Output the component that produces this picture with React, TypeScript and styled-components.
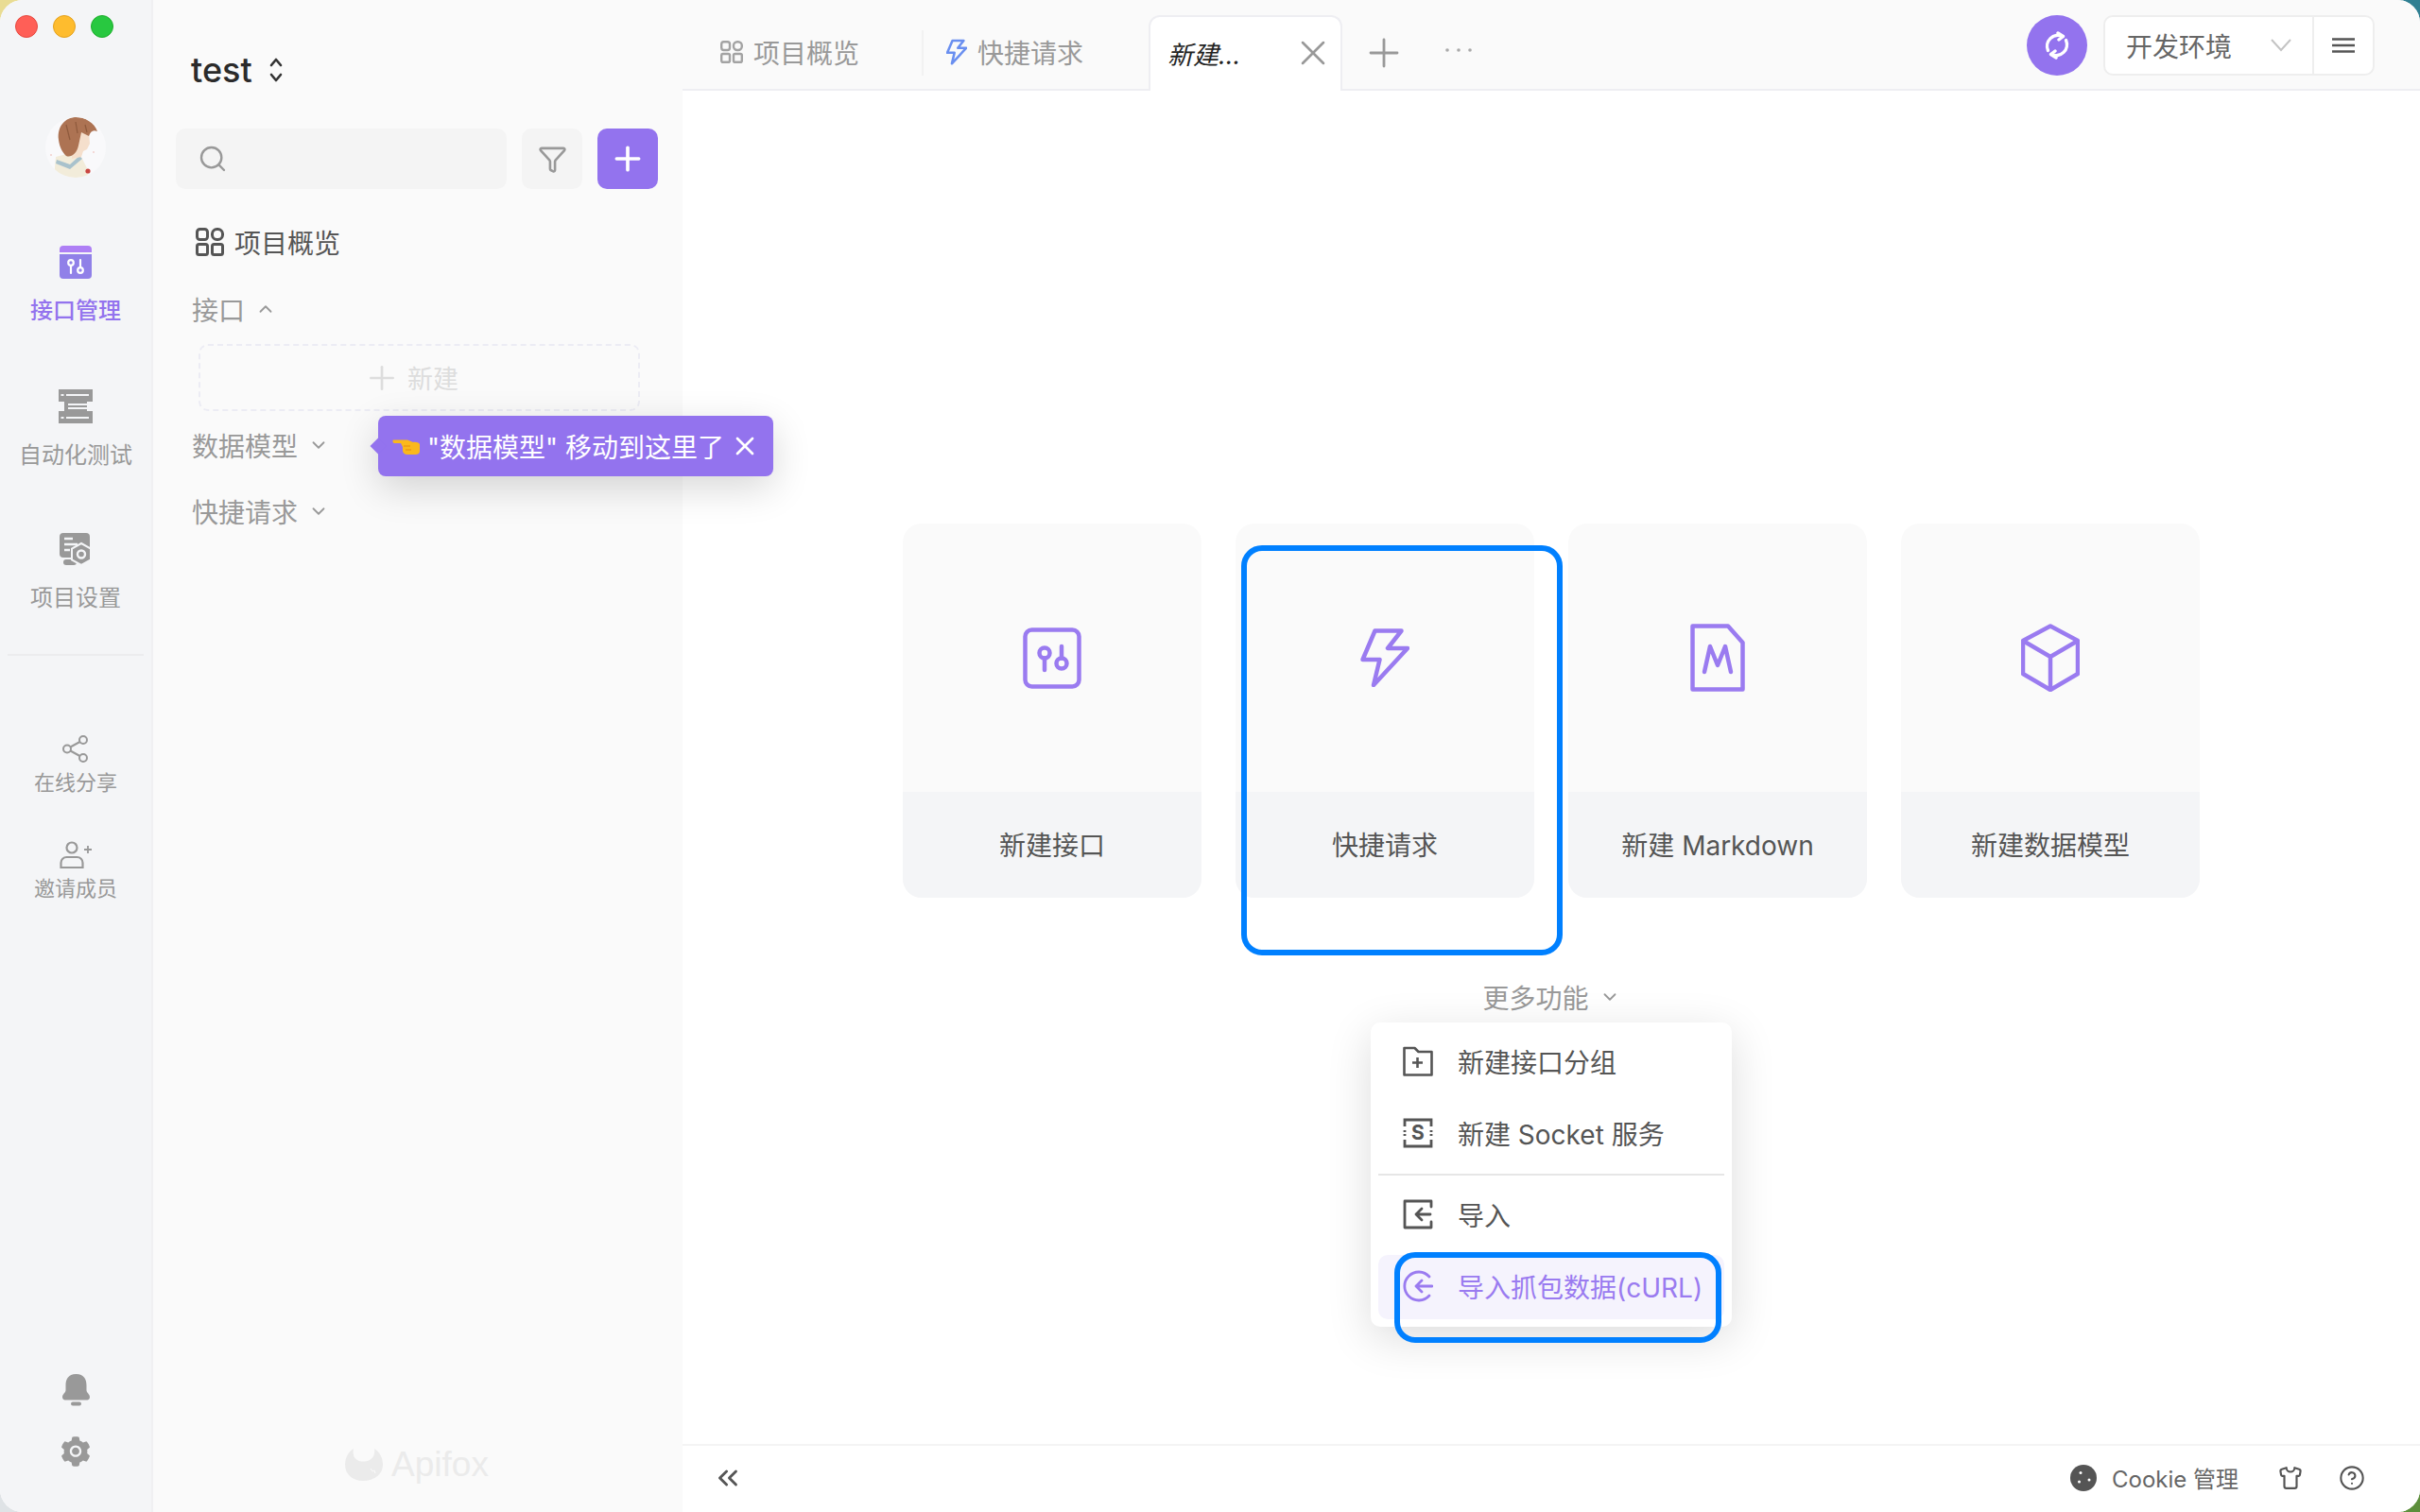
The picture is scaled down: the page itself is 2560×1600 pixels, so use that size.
import React from 'react';

import styled, { createGlobalStyle } from 'styled-components';
import { ChevronDown, ChevronUp, ChevronsLeft, CircleHelp, Filter, Plus, Search, Shirt, X } from 'lucide-react';
import { AiFillSetting } from 'react-icons/ai';

const purple = '#9373ee';
const iconPurple = '#9a7bf0';
const gray = '#999999';
const dark = '#555555';

const GlobalStyle = createGlobalStyle`
  html, body {
    margin: 0;
    padding: 0;
    overflow: hidden;
  }
  body {
    font-family: Inter, "Noto Sans CJK SC", sans-serif;
  }
`;

const Root = styled.div`
  position: relative;
  width: 2560px;
  height: 1600px;
  overflow: hidden;
  background:
    linear-gradient(90deg, #e9dc93 0 50%, #2f7f92 50% 100%) top / 100% 50% no-repeat,
    linear-gradient(90deg, #dfe3e6 0 50%, #5d8f3c 50% 100%) bottom / 100% 50% no-repeat;
`;

const Window = styled.div`
  display: flex;
  width: 100%;
  height: 100%;
  border-radius: 24px;
  overflow: hidden;
  background: #ffffff;
`;

const NavRail = styled.nav`
  display: flex;
  flex-direction: column;
  align-items: center;
  box-sizing: border-box;
  flex: 0 0 162px;
  padding-bottom: 46px;
  background: #f4f5f7;
  border-right: 2px solid #f0f0f2;
`;

const TrafficLights = styled.div`
  display: flex;
  gap: 16px;
  align-self: flex-start;
  padding: 16px 0 0 16px;
`;

const Light = styled.span<{ $color: string; $edge: string }>`
  box-sizing: border-box;
  width: 24px;
  height: 24px;
  border-radius: 50%;
  background: ${({ $color }) => $color};
  border: 1px solid ${({ $edge }) => $edge};
`;

const Avatar = styled.div`
  width: 64px;
  height: 64px;
  margin-top: 84px;
  margin-bottom: 72px;
  border-radius: 50%;
  overflow: hidden;
`;

const NavItem = styled.div<{ $active?: boolean }>`
  display: flex;
  flex-direction: column;
  align-items: center;
  gap: 19px;
  height: 152px;
  font-size: 24px;
  line-height: 30px;
  white-space: nowrap;
  color: ${({ $active }) => ($active ? purple : gray)};
  font-weight: ${({ $active }) => ($active ? 500 : 400)};
`;

const NavDivider = styled.div`
  flex: none;
  width: 144px;
  height: 2px;
  margin-top: -24px;
  margin-bottom: 84px;
  background: #ececee;
`;

const SmallNavItem = styled.div`
  display: flex;
  flex-direction: column;
  align-items: center;
  gap: 7px;
  height: 112px;
  font-size: 22px;
  line-height: 28px;
  white-space: nowrap;
  color: ${gray};
`;

const NavBottom = styled.div`
  display: flex;
  flex-direction: column;
  align-items: center;
  gap: 30px;
  margin-top: auto;
  color: ${gray};
`;

const Sidebar = styled.aside`
  position: relative;
  display: flex;
  flex-direction: column;
  box-sizing: border-box;
  flex: 0 0 560px;
  padding: 0 26px 33px 24px;
  background: #fafafa;
`;

const ProjectTitle = styled.div`
  display: flex;
  align-items: center;
  gap: 18px;
  height: 60px;
  margin-top: 44px;
  padding-left: 16px;
  font-size: 36px;
  font-weight: 500;
  color: #2b2b2b;
`;

const SearchRow = styled.div`
  display: flex;
  gap: 16px;
  margin-top: 32px;
`;

const SearchBox = styled.div`
  display: flex;
  align-items: center;
  box-sizing: border-box;
  width: 350px;
  height: 64px;
  padding-left: 23px;
  border-radius: 10px;
  background: #f4f4f4;
  color: ${gray};
`;

const SquareButton = styled.button<{ $primary?: boolean }>`
  display: flex;
  align-items: center;
  justify-content: center;
  width: 64px;
  height: 64px;
  padding: 0;
  border: none;
  border-radius: 10px;
  background: ${({ $primary }) => ($primary ? purple : '#f4f4f4')};
  color: ${({ $primary }) => ($primary ? '#ffffff' : gray)};
`;

const OverviewRow = styled.div`
  display: flex;
  align-items: center;
  gap: 11px;
  height: 40px;
  margin-top: 36px;
  padding-left: 21px;
  font-size: 28px;
  color: ${dark};
`;

const GroupRow = styled.div<{ $top: number }>`
  display: flex;
  align-items: center;
  gap: 11px;
  height: 40px;
  margin-top: ${({ $top }) => $top}px;
  padding-left: 17px;
  font-size: 28px;
  color: ${gray};
`;

const NewBox = styled.div`
  display: flex;
  align-items: center;
  justify-content: center;
  gap: 7px;
  box-sizing: border-box;
  width: 467px;
  height: 71px;
  margin: 17px 0 0 24px;
  padding-right: 18px;
  border: 2px dashed #ececf4;
  border-radius: 10px;
  font-size: 27px;
  color: #dddddd;
`;

const Tooltip = styled.div`
  position: absolute;
  left: 238px;
  top: 440px;
  display: flex;
  align-items: center;
  box-sizing: border-box;
  width: 418px;
  height: 64px;
  padding-left: 15px;
  border-radius: 8px;
  background: ${purple};
  box-shadow: 0 12px 40px rgba(0, 0, 0, 0.16);
  font-size: 28px;
  white-space: nowrap;
  color: #ffffff;

  &::before {
    content: '';
    position: absolute;
    left: -6px;
    top: 26px;
    width: 12px;
    height: 12px;
    background: ${purple};
    transform: rotate(45deg);
  }
`;

const TooltipText = styled.span`
  margin-left: 7px;
`;

const TooltipClose = styled.span`
  display: flex;
  margin-left: 6px;
`;

const Brand = styled.div`
  display: flex;
  align-items: center;
  justify-content: center;
  gap: 9px;
  margin-top: auto;
  font-family: "Liberation Sans", sans-serif;
  font-size: 37px;
  line-height: 35px;
  color: #ebebeb;
`;

const Main = styled.main`
  display: flex;
  flex-direction: column;
  flex: 1;
  min-width: 0;
`;

const TabBar = styled.div`
  display: flex;
  align-items: flex-end;
  box-sizing: border-box;
  flex: none;
  height: 96px;
  border-bottom: 2px solid #eeeef2;
  background: #fafafa;
`;

const Tab = styled.div<{ $width: number; $pad: number }>`
  display: flex;
  align-items: center;
  gap: 11px;
  box-sizing: border-box;
  width: ${({ $width }) => $width}px;
  height: 78px;
  padding-left: ${({ $pad }) => $pad}px;
  font-size: 28px;
  color: ${gray};
`;

const TabSeparator = styled.span`
  flex: none;
  align-self: flex-start;
  width: 2px;
  height: 48px;
  margin-top: 32px;
  background: #f2f2f2;
`;

const ActiveTab = styled.div`
  display: flex;
  align-items: center;
  justify-content: space-between;
  box-sizing: border-box;
  width: 205px;
  height: 80px;
  margin-bottom: -2px;
  padding: 0 7px 2px 18px;
  border: 2px solid #eeeef2;
  border-bottom: none;
  border-radius: 12px 12px 0 0;
  background: #ffffff;
  font-size: 27px;
  font-style: italic;
  color: #222222;
`;

const TabAction = styled.span<{ $left: number; $top: number; $color: string }>`
  display: flex;
  align-self: flex-start;
  margin-top: ${({ $top }) => $top}px;
  margin-left: ${({ $left }) => $left}px;
  color: ${({ $color }) => $color};
`;

const Toolbar = styled.div`
  display: flex;
  align-items: center;
  gap: 17px;
  align-self: flex-start;
  margin: 16px 48px 0 auto;
`;

const SyncButton = styled.span`
  display: flex;
  align-items: center;
  justify-content: center;
  width: 64px;
  height: 64px;
  border-radius: 50%;
  background: ${purple};
`;

const EnvSelect = styled.div`
  display: flex;
  box-sizing: border-box;
  width: 287px;
  height: 64px;
  border: 2px solid #eeeeee;
  border-radius: 10px;
  background: #ffffff;
`;

const EnvLabel = styled.div`
  display: flex;
  align-items: center;
  justify-content: space-between;
  box-sizing: border-box;
  width: 221px;
  padding: 0 22px;
  border-right: 2px solid #eeeeee;
  font-size: 28px;
  color: #666666;
`;

const EnvMenu = styled.div`
  display: flex;
  align-items: center;
  justify-content: center;
  flex: 1;
`;

const Content = styled.div`
  display: flex;
  flex-direction: column;
  align-items: center;
  flex: 1;
  padding-top: 458px;
  background: #ffffff;
`;

const CardRow = styled.div`
  display: grid;
  grid-template-columns: repeat(4, 316px);
  gap: 36px;
`;

const Card = styled.div`
  display: flex;
  flex-direction: column;
  height: 396px;
  border-radius: 20px;
  overflow: hidden;
  background: #fafafa;
`;

const CardIcon = styled.div`
  display: flex;
  align-items: center;
  justify-content: center;
  flex: 1;
  color: ${iconPurple};
`;

const CardLabel = styled.div`
  display: flex;
  align-items: center;
  justify-content: center;
  box-sizing: border-box;
  flex: 0 0 112px;
  padding-bottom: 3px;
  background: #f4f5f7;
  font-size: 28px;
  color: ${dark};
`;

const More = styled.div`
  position: relative;
  display: flex;
  align-items: center;
  gap: 11px;
  height: 40px;
  margin-top: 85px;
  font-size: 28px;
  color: ${gray};
`;

const Menu = styled.div`
  position: absolute;
  left: 50%;
  top: 47px;
  display: flex;
  flex-direction: column;
  gap: 8px;
  box-sizing: border-box;
  width: 382px;
  padding: 8px;
  border-radius: 10px;
  background: #ffffff;
  box-shadow: 0 12px 48px rgba(0, 0, 0, 0.14);
  transform: translateX(-50%);
`;

const MenuItem = styled.div<{ $active?: boolean }>`
  display: flex;
  align-items: center;
  gap: 26px;
  box-sizing: border-box;
  height: 68px;
  padding: 0 0 3px 26px;
  border-radius: 10px;
  font-size: 28px;
  white-space: nowrap;
  background: ${({ $active }) => ($active ? '#f5f3fd' : 'transparent')};
  color: ${({ $active }) => ($active ? iconPurple : dark)};
`;

const MenuDivider = styled.div`
  height: 2px;
  background: #e6e6e6;
`;

const BottomBar = styled.footer`
  display: flex;
  align-items: center;
  box-sizing: border-box;
  flex: none;
  height: 72px;
  padding: 0 58px 2px 31px;
  border-top: 2px solid #f4f4f4;
  background: #ffffff;
  color: ${dark};
`;

const BottomSpacer = styled.span`
  margin-left: auto;
`;

const CookieLabel = styled.span`
  margin: 0 42px 2px 16px;
  font-size: 24px;
  color: #666666;
`;

const HelpGap = styled.span`
  width: 38px;
`;

const Annotation = styled.div<{ $left: number; $top: number; $width: number; $height: number }>`
  position: absolute;
  box-sizing: border-box;
  left: ${({ $left }) => $left}px;
  top: ${({ $top }) => $top}px;
  width: ${({ $width }) => $width}px;
  height: ${({ $height }) => $height}px;
  border: 6px solid #0080ff;
  border-radius: 22px;
`;

const ChevronPair = () => (
  <svg width="14" height="28" viewBox="0 0 14 28" fill="none" stroke="#333" strokeWidth="2.6" strokeLinecap="round" strokeLinejoin="round">
    <path d="M2 9l5-6 5 6" />
    <path d="M2 19l5 6 5-6" />
  </svg>
);

const AvatarArt = () => (
  <svg width="64" height="64" viewBox="0 0 64 64">
    <defs>
      <filter id="soft"><feGaussianBlur stdDeviation="0.7" /></filter>
    </defs>
    <rect width="64" height="64" fill="#f9f9fb" />
    <g filter="url(#soft)">
      <path d="M9 64l2-22 15-4 12 4 8 16-2 6z" fill="#f2ecda" />
      <path d="M12 45l14 5 10-9 3 3-13 11-15-6z" fill="#a9c2cc" />
      <path d="M28 14l18 2 1 12-3 6-4 2-2 6-10 2z" fill="#f5dfcc" />
      <path d="M14 24C12 9 22 0 32 0c10 0 20 6 23 15-5-2-7 0-9 5l-8-4-3 14c-2 9-8 13-13 11-4-4-7-9-8-17z" fill="#ad7352" />
      <path d="M22 8l4 16M32 5l2 12M42 8l2 8" stroke="#8e5a3e" strokeWidth="1.200" fill="none" />
      <circle cx="45" cy="57" r="2.600" fill="#c9453f" />
      <circle cx="6" cy="40" r="1" fill="#f3cfcb" />
      <circle cx="51" cy="37" r="1" fill="#f3cfcb" />
    </g>
  </svg>
);

const ApiNavIcon = () => (
  <svg width="34" height="35" viewBox="0 0 34 35">
    <path d="M4 0h26a4 4 0 0 1 4 4v3H0V4a4 4 0 0 1 4-4z" fill="#ae7ff5" />
    <path d="M0 9h34v22a4 4 0 0 1-4 4H4a4 4 0 0 1-4-4z" fill="#9080e8" />
    <g fill="none" stroke="#fff" strokeWidth="2.200" strokeLinecap="round">
      <circle cx="12" cy="18" r="2.800" />
      <path d="M12 21v8" />
      <circle cx="22" cy="26" r="2.800" />
      <path d="M22 15v8" />
    </g>
  </svg>
);

const TestNavIcon = () => (
  <svg width="36" height="36" viewBox="0 0 36 36">
    <path d="M0 0h36v13H30v10h6v13H0V23h6V13H0z" fill="#999" />
    <g stroke="#f4f5f7" strokeWidth="2">
      <path d="M8 6h24M8 30h24M10 16h20M10 20h20" />
      <path d="M2.500 6h3M2.500 30h3" />
    </g>
  </svg>
);

const SettingsNavIcon = () => (
  <svg width="34" height="35" viewBox="0 0 34 35">
    <rect x="0" y="0" width="32" height="26" rx="4" fill="#999" />
    <rect x="4" y="28" width="14" height="6" rx="3" fill="#999" />
    <path d="M5 6h9M5 12h14M5 18h6" stroke="#f4f5f7" strokeWidth="2.400" />
    <path d="M23 11l10 5.500v12l-10 5.500-10-5.500v-12z" fill="#999" stroke="#f4f5f7" strokeWidth="2" />
    <circle cx="23" cy="22.500" r="4" fill="none" stroke="#f4f5f7" strokeWidth="2.400" />
  </svg>
);

const ShareIcon = () => (
  <svg width="28" height="29" viewBox="0 0 28 29" fill="none" stroke="currentColor" strokeWidth="2">
    <circle cx="22" cy="5" r="4" />
    <circle cx="5" cy="14.500" r="4" />
    <circle cx="22" cy="24" r="4" />
    <path d="M8.500 12.500l10-5.500M8.500 16.500l10 5.500" />
  </svg>
);

const InviteIcon = () => (
  <svg width="34" height="29" viewBox="0 0 34 29" fill="none" stroke="currentColor" strokeWidth="2.200">
    <circle cx="13" cy="7" r="5.500" />
    <path d="M1.500 28v-5a6 6 0 0 1 6-6h11a6 6 0 0 1 6 6v5z" />
    <path d="M26 9h8M30 5v8" strokeWidth="1.800" />
  </svg>
);

const BellIcon = () => (
  <svg width="29" height="34" viewBox="0 0 29 34" fill="currentColor">
    <path d="M14.500 0C6 0 3.500 6 3.500 12v5C3.500 20 0 21 0 24.500 0 27 2 27.500 4 27.500h21c2 0 4-.500 4-3 0-3.500-3.500-4.500-3.500-7.500v-5C25.500 6 23 0 14.500 0z" />
    <rect x="9" y="29.500" width="11" height="4" rx="2" />
  </svg>
);

const OverviewIcon = ({ size = 30, color = dark }: { size?: number; color?: string }) => (
  <svg width={size} height={size} viewBox="0 0 30 30" fill="none" stroke={color} strokeWidth="3">
    <rect x="1.500" y="1.500" width="11" height="11" rx="3" />
    <rect x="17.500" y="1.500" width="11" height="11" rx="5" />
    <rect x="1.500" y="17.500" width="11" height="11" rx="2" />
    <rect x="17.500" y="17.500" width="11" height="11" rx="2" />
  </svg>
);

const ApifoxLogo = () => (
  <svg width="40" height="35" viewBox="0 0 40 35" fill="#ebebeb">
    <path d="M9 1C3 5 0 11 0 18c0 10 8 17 19 17 12 0 21-7 21-17 0-7-3-13-9-17 1 5-1 10-5 12-4 2-10 2-13 0C9 11 8 6 9 1z" />
    <path d="M27 22l2 3 2-1 1 3" fill="none" stroke="#fafafa" strokeWidth="1" />
  </svg>
);

const HandIcon = () => (
  <svg width="30" height="20" viewBox="0 0 30 20">
    <path d="M1 3.500h15l6 2.500c2-.500 6 0 7 2v7c0 3-2 4-5 4h-8c-3 0-5-2-5-4V11L9 7H2C.500 7 0 4 1 3.500z" fill="#fbb81c" />
    <path d="M12 10h7M14 14h6" stroke="#e8890c" strokeWidth="1.200" />
  </svg>
);

const BoltPath = () => <path d="M15.500 2.500h28L29 21h21L14 60l6.500-27H2.500z" />;

const CardApiIcon = () => (
  <svg width="62" height="65" viewBox="0 0 62 65" fill="none" stroke="currentColor" strokeWidth="4.500" strokeLinecap="round" strokeLinejoin="round">
    <rect x="2.500" y="2.500" width="57" height="60" rx="7" />
    <circle cx="23" cy="27" r="5.500" />
    <path d="M23 32.500V45" />
    <circle cx="41" cy="38" r="5.500" />
    <path d="M41 20v12.500" />
  </svg>
);

const CardBoltIcon = () => (
  <svg width="52" height="62" viewBox="0 0 52 62" fill="none" stroke="currentColor" strokeWidth="4.500" strokeLinejoin="round">
    <BoltPath />
  </svg>
);

const CardDocIcon = () => (
  <svg width="58" height="72" viewBox="0 0 58 72" fill="none" stroke="currentColor" strokeWidth="4.500" strokeLinecap="round" strokeLinejoin="round">
    <path d="M2.500 2.500H40L55.500 20v49.500h-53z" />
    <path d="M15 51l6-27 8 20 8-20 6 27" />
  </svg>
);

const CardCubeIcon = () => (
  <svg width="62" height="72" viewBox="0 0 62 72" fill="none" stroke="currentColor" strokeWidth="4.500" strokeLinejoin="round">
    <path d="M31 2.500L60 18v35L31 70 2 53V18z" />
    <path d="M2 18l29 17 29-17M31 35v35" />
  </svg>
);

const FolderPlusIcon = () => (
  <svg width="32" height="32" viewBox="0 0 32 32" fill="none" stroke="currentColor" strokeWidth="2.600" strokeLinejoin="round">
    <path d="M1.500 2h11l4 4h14v24.500h-29z" />
    <path d="M10 17.500h11M15.500 12v11" />
  </svg>
);

const SocketIcon = () => (
  <svg width="32" height="32" viewBox="0 0 32 32" fill="none" stroke="currentColor" strokeWidth="2.800">
    <path d="M2 9V2h28v7M2 13v2M30 13v2M2 17v2M30 17v2M2 23v7h28v-7" />
    <text x="16" y="23" textAnchor="middle" fontSize="21" fontWeight="700" fontFamily="Inter, sans-serif" fill="currentColor" stroke="none">S</text>
  </svg>
);

const ImportIcon = () => (
  <svg width="32" height="32" viewBox="0 0 32 32" fill="none" stroke="currentColor" strokeWidth="2.800" strokeLinecap="round" strokeLinejoin="round">
    <path d="M30 8V2H2v28h28v-6" />
    <path d="M29 16H14M20 10l-6 6 6 6" />
  </svg>
);

const CaptureIcon = () => (
  <svg width="32" height="34" viewBox="0 0 32 34" fill="none" stroke="currentColor" strokeWidth="2.800" strokeLinecap="round" strokeLinejoin="round">
    <path d="M28 7a15 15 0 1 0 0 20" />
    <path d="M31 17H14M20 11l-6 6 6 6" />
  </svg>
);

const CookieIcon = () => (
  <svg width="28" height="28" viewBox="0 0 28 28">
    <circle cx="14" cy="14" r="14" fill="#555" />
    <circle cx="11" cy="8.500" r="1.500" fill="#fff" />
    <circle cx="9.500" cy="18" r="1.500" fill="#fff" />
    <circle cx="20" cy="16" r="1.500" fill="#fff" />
  </svg>
);

const SyncIcon = () => (
  <svg width="30" height="30" viewBox="0 0 30 30" fill="none" stroke="#fff" strokeWidth="3.400" strokeLinecap="round" strokeLinejoin="round">
    <path d="M5.500 20.500A11.500 11.500 0 0 1 21 5.500" />
    <path d="M24.500 9.500A11.500 11.500 0 0 1 9 24.500" />
    <path d="M16 2l5.500 3.500L17 9M14 28l-5.500-3.500L13 21" />
  </svg>
);

const Caret = () => (
  <svg width="22" height="14" viewBox="0 0 22 14" fill="none" stroke="#c4c4c4" strokeWidth="2">
    <path d="M1 1l10 11L21 1" />
  </svg>
);

const Hamburger = () => (
  <svg width="24" height="16" viewBox="0 0 24 16" stroke="#555" strokeWidth="2.600">
    <path d="M0 1.500h24M0 8h24M0 14.500h24" />
  </svg>
);

const TabBolt = () => (
  <svg width="22" height="28" viewBox="0 0 52 62" fill="none" stroke="#6a8ff0" strokeWidth="6" strokeLinejoin="round">
    <BoltPath />
  </svg>
);

const Dots = () => (
  <svg width="28" height="4" viewBox="0 0 28 4" fill="#aaa">
    <circle cx="2" cy="2" r="1.800" />
    <circle cx="14" cy="2" r="1.800" />
    <circle cx="26" cy="2" r="1.800" />
  </svg>
);

const cards = [
  { label: '新建接口', icon: <CardApiIcon /> },
  { label: '快捷请求', icon: <CardBoltIcon /> },
  { label: '新建 Markdown', icon: <CardDocIcon /> },
  { label: '新建数据模型', icon: <CardCubeIcon /> }
];

const menuItems = [
  { label: '新建接口分组', icon: <FolderPlusIcon /> },
  { label: '新建 Socket 服务', icon: <SocketIcon /> }
];

export default function App() {
  return (
    <Root>
      <GlobalStyle />
      <Window>
        <NavRail>
          <TrafficLights>
            <Light $color="#ff5f57" $edge="#e5483f" />
            <Light $color="#febc2e" $edge="#e3a01c" />
            <Light $color="#28c840" $edge="#1dad2b" />
          </TrafficLights>
          <Avatar><AvatarArt /></Avatar>
          <NavItem $active><ApiNavIcon />接口管理</NavItem>
          <NavItem><TestNavIcon />自动化测试</NavItem>
          <NavItem><SettingsNavIcon />项目设置</NavItem>
          <NavDivider />
          <SmallNavItem><ShareIcon />在线分享</SmallNavItem>
          <SmallNavItem><InviteIcon />邀请成员</SmallNavItem>
          <NavBottom>
            <BellIcon />
            <AiFillSetting size={36} />
          </NavBottom>
        </NavRail>

        <Sidebar>
          <ProjectTitle>test <ChevronPair /></ProjectTitle>
          <SearchRow>
            <SearchBox><Search size={32} strokeWidth={1.8} /></SearchBox>
            <SquareButton><Filter size={31} strokeWidth={2} /></SquareButton>
            <SquareButton $primary><Plus size={40} strokeWidth={2.2} /></SquareButton>
          </SearchRow>
          <OverviewRow><OverviewIcon />项目概览</OverviewRow>
          <GroupRow $top={31}>接口 <ChevronUp size={22} /></GroupRow>
          <NewBox><Plus size={40} strokeWidth={1.6} />新建</NewBox>
          <GroupRow $top={16}>数据模型 <ChevronDown size={22} /></GroupRow>
          <GroupRow $top={30}>快捷请求 <ChevronDown size={22} /></GroupRow>
          <Tooltip>
            <HandIcon />
            <TooltipText>"数据模型" 移动到这里了</TooltipText>
            <TooltipClose><X size={32} strokeWidth={2} /></TooltipClose>
          </Tooltip>
          <Brand><ApifoxLogo />Apifox</Brand>
        </Sidebar>

        <Main>
          <TabBar>
            <Tab $width={253} $pad={40}><OverviewIcon size={24} color="#a3a3a3" />项目概览</Tab>
            <TabSeparator />
            <Tab $width={238} $pad={24}><TabBolt />快捷请求</Tab>
            <ActiveTab>新建...<X size={44} strokeWidth={1.4} color="#999" /></ActiveTab>
            <TabAction $left={20} $top={32} $color="#999"><Plus size={48} strokeWidth={1.4} /></TabAction>
            <TabAction $left={41} $top={51} $color="#aaa"><Dots /></TabAction>
            <Toolbar>
              <SyncButton><SyncIcon /></SyncButton>
              <EnvSelect>
                <EnvLabel>开发环境<Caret /></EnvLabel>
                <EnvMenu><Hamburger /></EnvMenu>
              </EnvSelect>
            </Toolbar>
          </TabBar>

          <Content>
            <CardRow>
              {cards.map(({ label, icon }) =>
                <Card key={label}>
                  <CardIcon>{icon}</CardIcon>
                  <CardLabel>{label}</CardLabel>
                </Card>
              )}
            </CardRow>
            <More>
              更多功能 <ChevronDown size={22} />
              <Menu>
                {menuItems.map(({ label, icon }) =>
                  <MenuItem key={label}>{icon}{label}</MenuItem>
                )}
                <MenuDivider />
                <MenuItem><ImportIcon />导入</MenuItem>
                <MenuItem $active><CaptureIcon />导入抓包数据(cURL)</MenuItem>
              </Menu>
            </More>
          </Content>

          <BottomBar>
            <ChevronsLeft size={34} strokeWidth={2} />
            <BottomSpacer />
            <CookieIcon />
            <CookieLabel>Cookie 管理</CookieLabel>
            <Shirt size={26} strokeWidth={2} />
            <HelpGap />
            <CircleHelp size={28} strokeWidth={1.8} />
          </BottomBar>
        </Main>
      </Window>
      <Annotation $left={1313} $top={577} $width={340} $height={434} />
      <Annotation $left={1475} $top={1325} $width={346} $height={96} />
    </Root>
  );
}
